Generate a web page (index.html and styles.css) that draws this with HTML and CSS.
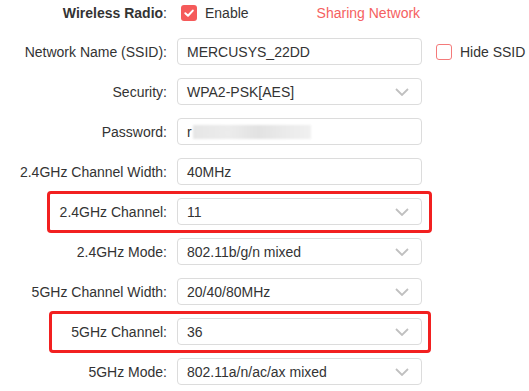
FILE: index.html
```html
<!DOCTYPE html>
<html>
<head>
<meta charset="utf-8">
<link rel="stylesheet" href="styles.css">
</head>
<body>
<div class="form">
  <div class="row head">
    <div class="label"><b>Wireless Radio</b>:</div>
    <div class="ctrl">
      <span class="check on"><svg viewBox="0 0 16 16" width="16" height="16"><path d="M4.3 8.2 L7 10.8 L11.8 5.6" fill="none" stroke="#fff" stroke-width="2" stroke-linecap="round" stroke-linejoin="round"/></svg></span>
      <span class="check-text">Enable</span>
      <span class="share">Sharing Network</span>
    </div>
  </div>
  <div class="row">
    <div class="label">Network Name (SSID):</div>
    <div class="ctrl">
      <div class="field">MERCUSYS_22DD</div>
      <span class="check off"></span>
      <span class="check-text">Hide SSID</span>
    </div>
  </div>
  <div class="row">
    <div class="label">Security:</div>
    <div class="ctrl"><div class="field select">WPA2-PSK[AES]<svg class="chev" viewBox="0 0 14 8" width="14" height="8"><path d="M1 1 L7 7 L13 1" fill="none" stroke="#c0c0c0" stroke-width="1.8"/></svg></div></div>
  </div>
  <div class="row">
    <div class="label">Password:</div>
    <div class="ctrl"><div class="field">r<span class="blur"></span></div></div>
  </div>
  <div class="row">
    <div class="label">2.4GHz Channel Width:</div>
    <div class="ctrl"><div class="field">40MHz</div></div>
  </div>
  <div class="row mark mark-a">
    <div class="label">2.4GHz Channel:</div>
    <div class="ctrl"><div class="field select">11<svg class="chev" viewBox="0 0 14 8" width="14" height="8"><path d="M1 1 L7 7 L13 1" fill="none" stroke="#c0c0c0" stroke-width="1.8"/></svg></div></div>
  </div>
  <div class="row">
    <div class="label">2.4GHz Mode:</div>
    <div class="ctrl"><div class="field select">802.11b/g/n mixed<svg class="chev" viewBox="0 0 14 8" width="14" height="8"><path d="M1 1 L7 7 L13 1" fill="none" stroke="#c0c0c0" stroke-width="1.8"/></svg></div></div>
  </div>
  <div class="row">
    <div class="label">5GHz Channel Width:</div>
    <div class="ctrl"><div class="field select">20/40/80MHz<svg class="chev" viewBox="0 0 14 8" width="14" height="8"><path d="M1 1 L7 7 L13 1" fill="none" stroke="#c0c0c0" stroke-width="1.8"/></svg></div></div>
  </div>
  <div class="row mark mark-b">
    <div class="label">5GHz Channel:</div>
    <div class="ctrl"><div class="field select">36<svg class="chev" viewBox="0 0 14 8" width="14" height="8"><path d="M1 1 L7 7 L13 1" fill="none" stroke="#c0c0c0" stroke-width="1.8"/></svg></div></div>
  </div>
  <div class="row">
    <div class="label">5GHz Mode:</div>
    <div class="ctrl"><div class="field select">802.11a/n/ac/ax mixed<svg class="chev" viewBox="0 0 14 8" width="14" height="8"><path d="M1 1 L7 7 L13 1" fill="none" stroke="#c0c0c0" stroke-width="1.8"/></svg></div></div>
  </div>
</div>
</body>
</html>
```
FILE: styles.css
```css
html, body {
  margin: 0;
  padding: 0;
  background: #fff;
}
body {
  font-family: "Liberation Sans", Arial, sans-serif;
  font-size: 14px;
  color: #333;
  overflow: hidden;
}
.form {
  display: flex;
  flex-direction: column;
  gap: 13px;
  padding-top: 1px;
}
.row {
  display: flex;
  align-items: center;
  height: 27px;
  position: relative;
}
.row.head {
  height: 24px;
}
.label {
  width: 167px;
  text-align: right;
  flex: none;
  white-space: nowrap;
}
.label b {
  font-weight: bold;
}
.ctrl {
  margin-left: 10px;
  display: flex;
  align-items: center;
}
.field {
  box-sizing: border-box;
  width: 245px;
  height: 27px;
  border: 1px solid #dcdcdc;
  border-radius: 4px;
  padding: 0 12px 0 9px;
  display: flex;
  align-items: center;
  white-space: nowrap;
}
.select {
  justify-content: space-between;
}
.chev {
  flex: none;
}
.check {
  box-sizing: border-box;
  width: 16px;
  height: 16px;
  border-radius: 3px;
  display: inline-flex;
  flex: none;
}
.head .check {
  margin-left: 4px;
}
.check.on {
  background: #f55a5a;
}
.check.off {
  border: 1.5px solid #f47a7a;
  margin-left: 14px;
}
.check-text {
  margin-left: 8px;
}
.share {
  margin-left: 68px;
  color: #f56161;
}
.blur {
  display: inline-block;
  width: 118px;
  height: 14px;
  margin-left: 1px;
  background: linear-gradient(90deg, #e6e6e6 0%, #ececec 30%, #e2e2e2 55%, #ebebeb 80%, #f0f0f0 100%);
  filter: blur(1px);
}
.mark::after {
  content: "";
  position: absolute;
  top: -7px;
  height: 42px;
  box-sizing: border-box;
  border: 3px solid #f22020;
  border-radius: 4px;
  pointer-events: none;
}
.mark-a::after {
  left: 47px;
  width: 385px;
}
.mark-b::after {
  left: 49px;
  width: 382px;
}
```
